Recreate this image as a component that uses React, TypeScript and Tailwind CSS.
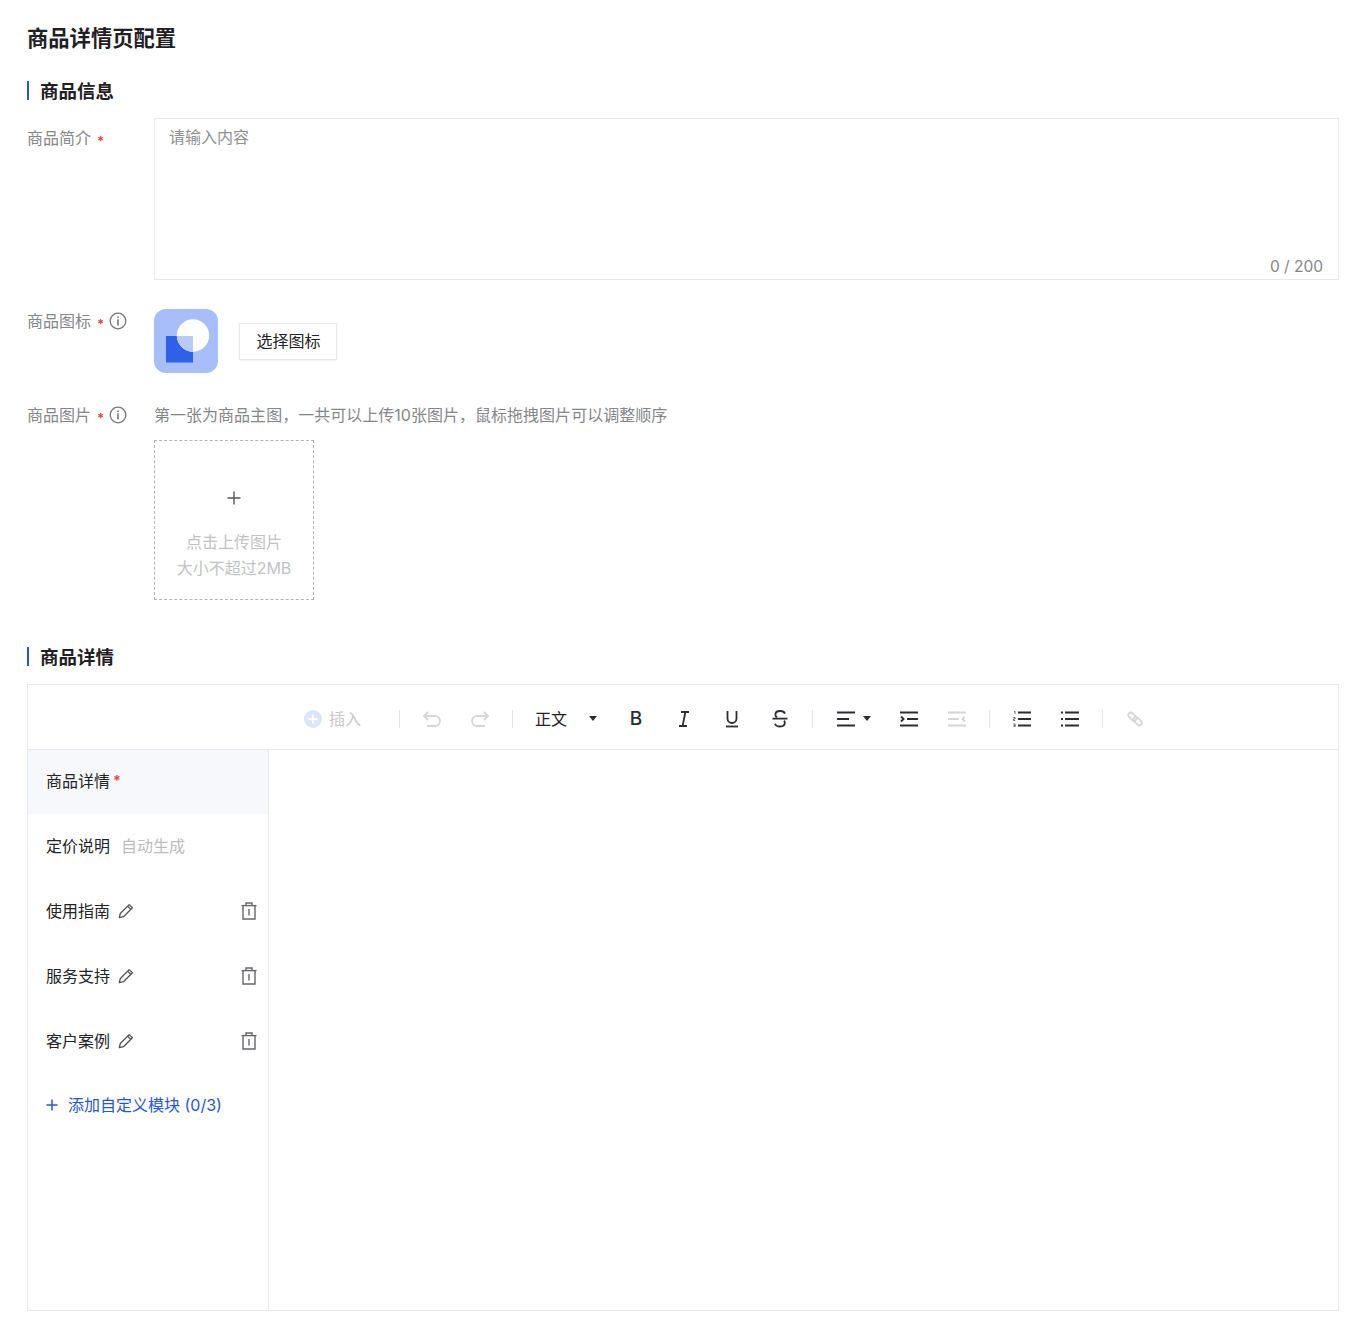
import type { ReactNode } from 'react';

const ink = '#2b2d33';
const faded = '#d6d6d8';

const Req = () => <span className="text-[#e5484d] text-[13px] leading-none ml-[6px] mt-[6px] font-bold">*</span>;

const Info = () => (
  <svg width="18" height="18" viewBox="0 0 18 18" fill="none" className="ml-[5px] -mt-[1px]">
    <circle cx="9" cy="9" r="7.8" stroke="#77787c" strokeWidth="1.3" />
    <rect x="8.2" y="4.4" width="1.6" height="1.6" fill="#77787c" />
    <rect x="8.2" y="7.3" width="1.6" height="6.2" fill="#77787c" />
  </svg>
);

const Heading = ({ children }: { children: ReactNode }) => (
  <div className="flex items-center h-[19px]">
    <div className="w-[2px] h-[19px] bg-[#2458d8]" />
    <h2 className="ml-[11px] pt-[2px] text-[18.5px] leading-[19px] font-semibold text-[#1f2024]">{children}</h2>
  </div>
);

const ToolBtn = ({ children }: { children: ReactNode }) => (
  <div className="w-12 h-full flex items-center justify-center">{children}</div>
);

const Sep = () => <div className="w-px h-[18px] mx-2 bg-[#e4e4e6]" />;

const Caret = () => (
  <svg width="8" height="5" viewBox="0 0 8 5">
    <path d="M0 0h8L4 5z" fill={ink} />
  </svg>
);

const Pencil = () => (
  <svg width="16" height="16" viewBox="0 0 16 16" fill="none" stroke="#505155" strokeWidth="1.3" strokeLinejoin="round" className="ml-2">
    <path d="M11.2 1.6l3.2 3.2-8.9 8.9-4.2 1 1-4.2z" />
    <path d="M9.6 3.2l3.2 3.2" />
  </svg>
);

const Trash = () => (
  <svg width="16" height="18" viewBox="0 0 16 18" fill="none" stroke="#66676b" strokeWidth="1.4" className="ml-auto mr-[11px]">
    <path d="M0.5 3.6h15" />
    <path d="M5 3.6V1h6v2.6" />
    <path d="M2 3.6V17h12V3.6" />
    <path d="M8 7v6.5" />
  </svg>
);

const rows = ['使用指南', '服务支持', '客户案例'];

export default function App() {
  return (
    <div className="w-[1370px] h-[1328px] bg-white pl-[27px] pr-[31px] pt-[24px] font-['Inter','Noto_Sans_CJK_SC',sans-serif] text-[16px]">
      <h1 className="text-[21.3px] leading-[28px] font-semibold text-[#1f2024]">商品详情页配置</h1>

      <div className="mt-[29px]">
        <Heading>商品信息</Heading>
      </div>

      <div className="mt-[18px] flex">
        <div className="w-[127px] pt-[8px] flex items-center h-[32px] text-[#85868a]">
          商品简介<Req />
        </div>
        <div className="relative flex-1 h-[162px] border border-[#e8e8ee]">
          <textarea
            placeholder="请输入内容"
            className="w-full h-full resize-none outline-none px-[14px] py-[5px] leading-[26px] placeholder:text-[#8f9094]"
          />
          <span className="absolute right-[15px] -bottom-px leading-[26px] text-[15.5px] text-[#85868a]">0 / 200</span>
        </div>
      </div>

      <div className="mt-[29px] flex">
        <div className="w-[127px] h-[24px] flex items-center text-[#85868a]">
          商品图标<Req /><Info />
        </div>
        <svg width="64" height="64" viewBox="0 0 64 64">
          <rect width="64" height="64" rx="12" fill="#a7befb" />
          <rect x="12" y="27" width="27" height="26.5" fill="#2f60ea" />
          <circle cx="39" cy="26.5" r="16.2" fill="#fff" />
          <path d="M39 27v15.7A16.2 16.2 0 0 1 23 27z" fill="#b9caf9" />
        </svg>
        <button className="ml-[21px] mt-[14px] w-[98px] h-[37px] pb-[2px] pl-[1px] border border-[#e8e8ee] shadow-[0_1px_2px_rgba(0,0,0,0.05)] text-[#222327] bg-white">
          选择图标
        </button>
      </div>

      <div className="mt-[29px] flex">
        <div className="w-[127px] h-[26px] flex items-center text-[#85868a]">
          商品图片<Req /><Info />
        </div>
        <div>
          <p className="leading-[26px] tracking-[0.02px] text-[#85868a]">第一张为商品主图，一共可以上传10张图片，鼠标拖拽图片可以调整顺序</p>
          <div className="mt-[12px] w-[160px] h-[160px] border border-dashed border-[#b4b4b6] flex flex-col items-center text-[#c2c2c4] leading-[26px]">
            <svg width="14" height="14" viewBox="0 0 14 14" stroke="#55565a" strokeWidth="1.4" className="mt-[50px] mb-[24px]">
              <path d="M7 0.5v13M0.5 7h13" />
            </svg>
            <span>点击上传图片</span>
            <span>大小不超过2MB</span>
          </div>
        </div>
      </div>

      <div className="mt-[47px]">
        <Heading>商品详情</Heading>
      </div>

      <div className="mt-[18px] h-[627px] border border-[#e8e8ee] flex flex-col">
        <div className="h-[65px] shrink-0 border-b border-[#e8e8ee] flex items-center pl-[276px] pt-[3px]">
          <div className="w-[87px] flex items-center text-[#c8c8ca]">
            <svg width="18" height="18" viewBox="0 0 18 18">
              <circle cx="9" cy="9" r="9" fill="#dbe5fd" />
              <path d="M9 4.5v9M4.5 9h9" stroke="#fff" strokeWidth="2" />
            </svg>
            <span className="ml-[7px]">插入</span>
          </div>
          <Sep />
          <ToolBtn>
            <svg width="20" height="16" viewBox="0 0 20 16" fill="none" stroke={faded} strokeWidth="1.8">
              <path d="M6 1L2 5l4 4" />
              <path d="M2 5h11a5 5 0 0 1 0 10H5" />
            </svg>
          </ToolBtn>
          <ToolBtn>
            <svg width="20" height="16" viewBox="0 0 20 16" fill="none" stroke={faded} strokeWidth="1.8">
              <path d="M14 1l4 4-4 4" />
              <path d="M18 5H7a5 5 0 0 0 0 10h8" />
            </svg>
          </ToolBtn>
          <Sep />
          <div className="w-[91px] pl-[14px] flex items-center text-[#222327]">
            <span>正文</span>
            <span className="ml-[22px] flex"><Caret /></span>
          </div>
          <ToolBtn>
            <span className="pt-[2px] font-['Inter',sans-serif] text-[19px] font-medium text-[#2b2d33]">B</span>
          </ToolBtn>
          <ToolBtn>
            <svg width="12" height="16" viewBox="0 0 12 16" fill="none" stroke={ink} strokeWidth="1.8">
              <path d="M3 1h8M1 15h8M7.4 1L4.6 15" />
            </svg>
          </ToolBtn>
          <ToolBtn>
            <svg width="14" height="18" viewBox="0 0 14 18" fill="none" stroke={ink} strokeWidth="1.8">
              <path d="M2.5 1v7.5a4.5 4.5 0 0 0 9 0V1" />
              <path d="M1 16.5h12" />
            </svg>
          </ToolBtn>
          <ToolBtn>
            <svg width="16" height="18" viewBox="0 0 16 18" fill="none" stroke={ink} strokeWidth="1.8">
              <path d="M13 3.6C12.4 2 10.6 1 8 1 5.2 1 3.4 2.3 3.4 4.4c0 1.2.6 2.2 1.6 2.9" />
              <path d="M0.5 8.6h15" />
              <path d="M12 10.6c.5.6.8 1.3.8 2.2 0 2.3-2 3.7-4.8 3.7-2.6 0-4.4-1-5-2.8" />
            </svg>
          </ToolBtn>
          <Sep />
          <div className="w-[64px] pl-[16px] flex items-center">
            <svg width="18" height="16" viewBox="0 0 18 16" fill="none" stroke={ink} strokeWidth="1.8">
              <path d="M0 1.5h18M0 8h12M0 14.5h18" />
            </svg>
            <span className="ml-[8px] flex"><Caret /></span>
          </div>
          <ToolBtn>
            <svg width="18" height="16" viewBox="0 0 18 16" fill="none" stroke={ink} strokeWidth="1.8">
              <path d="M0 1.5h18M7 8h11M0 14.5h18" />
              <path d="M1 5.5L3.6 8 1 10.5" />
            </svg>
          </ToolBtn>
          <ToolBtn>
            <svg width="18" height="16" viewBox="0 0 18 16" fill="none" stroke={faded} strokeWidth="1.8">
              <path d="M0 1.5h18M0 8h11M0 14.5h18" />
              <path d="M17 5.5L14.4 8l2.6 2.5" />
            </svg>
          </ToolBtn>
          <Sep />
          <ToolBtn>
            <svg width="18" height="16" viewBox="0 0 18 16" fill="none" stroke={ink}>
              <path d="M5 1.5h13M5 8h13M5 14.5h13" strokeWidth="1.8" />
              <path d="M1 0.2h1v3M0.3 6.5h1.8v1.5H0.4v1.5h1.8M0.3 13h1.8v3H0.3M0.6 14.5h1.5" strokeWidth="0.7" />
            </svg>
          </ToolBtn>
          <ToolBtn>
            <svg width="18" height="16" viewBox="0 0 18 16" fill="none" stroke={ink} strokeWidth="1.8">
              <path d="M4 1.5h14M4 8h14M4 14.5h14" />
              <path d="M0 1.5h2M0 8h2M0 14.5h2" />
            </svg>
          </ToolBtn>
          <Sep />
          <ToolBtn>
            <svg width="16" height="16" viewBox="0 0 16 16" fill="none" stroke={faded} strokeWidth="1.9">
              <rect x="0.6" y="3.2" width="9.6" height="5" rx="2.5" transform="rotate(45 5.4 5.7)" />
              <rect x="5.8" y="7.8" width="9.6" height="5" rx="2.5" transform="rotate(45 10.6 10.3)" />
            </svg>
          </ToolBtn>
        </div>

        <div className="flex-1 flex">
          <aside className="w-[241px] border-r border-[#e8e8ee] text-[#222327]">
            <div className="h-[64px] bg-[#f7f8fc] pl-[18px] pb-[3px] flex items-center">
              商品详情<span className="text-[#e5484d] ml-[3px] leading-none text-[14px] font-bold">*</span>
            </div>
            <div className="h-[65px] pl-[18px] pb-px flex items-center">
              定价说明<span className="ml-[11px] text-[#bcbcbe]">自动生成</span>
            </div>
            {rows.map((r) => (
              <div key={r} className="h-[65px] pl-[18px] pb-px flex items-center">
                {r}
                <Pencil />
                <Trash />
              </div>
            ))}
            <div className="h-[65px] pl-[18px] pb-[3px] flex items-center text-[#2458d8]">
              <svg width="12" height="12" viewBox="0 0 12 12" stroke="#2458d8" strokeWidth="1.5">
                <path d="M6 0.5v11M0.5 6h11" />
              </svg>
              <span className="ml-[10px]">添加自定义模块 (0/3)</span>
            </div>
          </aside>
          <div className="flex-1" />
        </div>
      </div>
    </div>
  );
}
